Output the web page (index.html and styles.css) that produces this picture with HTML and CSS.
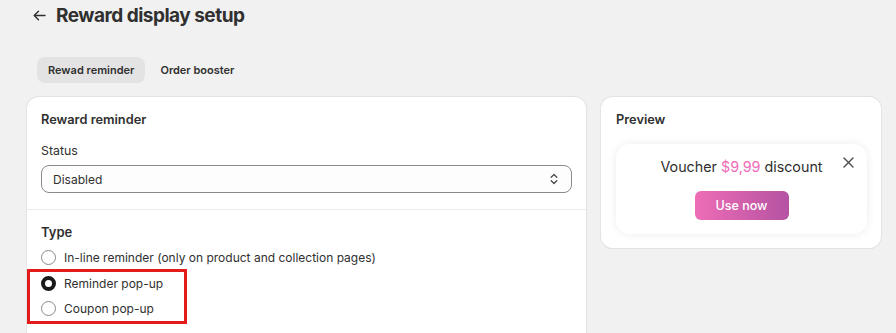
FILE: index.html
```html
<!DOCTYPE html>
<html>
<head>
<meta charset="utf-8">
<link rel="stylesheet" href="styles.css">
</head>
<body>
<div class="page">
  <header class="header">
    <svg class="back" width="13" height="11" viewBox="0 0 13 11"><path d="M12 5.5H1.5M5.5 1.2L1.2 5.5l4.3 4.3" fill="none" stroke="#303030" stroke-width="1.4" stroke-linecap="round" stroke-linejoin="round"/></svg>
    <h1 class="title">Reward display setup</h1>
  </header>
  <nav class="tabs">
    <span class="tab active">Rewad reminder</span>
    <span class="tab">Order booster</span>
  </nav>
  <div class="layout">
    <section class="card left">
      <div class="section">
        <h2 class="card-title">Reward reminder</h2>
        <label class="label">Status</label>
        <div class="select">
          <span>Disabled</span>
          <svg width="10" height="14" viewBox="0 0 10 14"><path d="M2.2 5.2L5 2.5l2.8 2.7M2.2 8.8L5 11.5l2.8-2.7" fill="none" stroke="#4a4a4a" stroke-width="1.3" stroke-linecap="round" stroke-linejoin="round"/></svg>
        </div>
      </div>
      <div class="section type">
        <h3 class="type-title">Type</h3>
        <div class="radio"><span class="dot"></span>In-line reminder (only on product and collection pages)</div>
        <div class="radio"><span class="dot on"></span>Reminder pop-up</div>
        <div class="radio"><span class="dot"></span>Coupon pop-up</div>
      </div>
    </section>
    <section class="card right">
      <h2 class="card-title">Preview</h2>
      <div class="popup">
        <p class="voucher">Voucher <span class="price">$9,99</span> discount</p>
        <svg class="close" width="11" height="11" viewBox="0 0 11 11"><path d="M1 1l9 9M10 1l-9 9" stroke="#4a4a4a" stroke-width="1.4" stroke-linecap="round"/></svg>
        <button class="use">Use now</button>
      </div>
    </section>
  </div>
</div>
<div class="highlight"></div>
</body>
</html>
```
FILE: styles.css
```css
* { box-sizing: border-box; }
html, body { margin: 0; height: 100%; }
body {
  background: #f1f1f1;
  font-family: Inter, "Noto Sans", sans-serif;
  color: #303030;
  overflow: hidden;
  position: relative;
}
.page { padding: 0 15px 0 27px; }
.header {
  display: flex;
  align-items: center;
  height: 30px;
  padding-left: 6px;
  gap: 10px;
}
.back { flex: none; }
.title {
  margin: 0;
  font-size: 19px;
  font-weight: 700;
  letter-spacing: -0.5px;
}
.tabs {
  display: flex;
  gap: 4px;
  margin-top: 27px;
  padding-left: 10px;
}
.tab {
  font-size: 11px;
  font-weight: 600;
  line-height: 26px;
  height: 26px;
  padding: 0 11px;
  border-radius: 8px;
  color: #303030;
}
.tab.active { background: #e3e3e3; }
.layout {
  display: grid;
  grid-template-columns: 559px 280px;
  gap: 15px;
  margin-top: 14px;
  align-items: start;
}
.card {
  background: #fff;
  border-radius: 12px;
  box-shadow: 0 0 0 1px #e3e3e3, 0 1px 0 #d4d4d4;
}
.left { height: 300px; }
.section { padding: 13px 14px 16px; }
.section + .section { border-top: 1px solid #ebebeb; }
.card-title {
  margin: 0;
  font-size: 12.8px;
  font-weight: 600;
  line-height: 20px;
}
.label {
  display: block;
  margin-top: 11px;
  font-size: 12.3px;
  line-height: 20px;
}
.select {
  margin-top: 4px;
  height: 28px;
  border: 1px solid #8a8a8a;
  border-radius: 8px;
  background: #fdfdfd;
  display: flex;
  align-items: center;
  justify-content: space-between;
  padding: 0 12px 0 11px;
  font-size: 12px;
}
.type { padding-top: 12px; }
.type-title {
  margin: 0 0 3px;
  font-size: 13px;
  font-weight: 600;
  line-height: 20px;
}
.radio {
  display: flex;
  align-items: center;
  gap: 8px;
  height: 25.5px;
  font-size: 12px;
  color: #303030;
}
.dot {
  width: 15px;
  height: 15px;
  border-radius: 50%;
  border: 1px solid #8a8a8a;
  background: #fff;
  flex: none;
}
.dot.on { border: 4px solid #1a1a1a; }
.right { padding: 13px 14px 14px 15px; }
.popup {
  margin-top: 14px;
  height: 90px;
  border-radius: 14px;
  background: #fff;
  box-shadow: 0 0 10px rgba(0,0,0,0.08);
  position: relative;
  display: flex;
  flex-direction: column;
  align-items: center;
  padding-top: 13px;
}
.voucher {
  margin: 0;
  font-size: 14.3px;
  line-height: 20px;
  color: #303030;
}
.price { color: #ef6ab6; }
.close { position: absolute; top: 13px; right: 13px; }
.use {
  margin-top: 14px;
  width: 94px;
  height: 29px;
  border: 0;
  border-radius: 6px;
  background: linear-gradient(90deg, #ee6cb6, #b553a2);
  color: #fff;
  font-family: Inter, "Noto Sans", sans-serif;
  font-size: 12.5px;
  font-weight: 500;
}
.highlight {
  position: absolute;
  left: 27px;
  top: 269px;
  width: 160px;
  height: 55px;
  border: 3px solid #e31b1b;
}
```
